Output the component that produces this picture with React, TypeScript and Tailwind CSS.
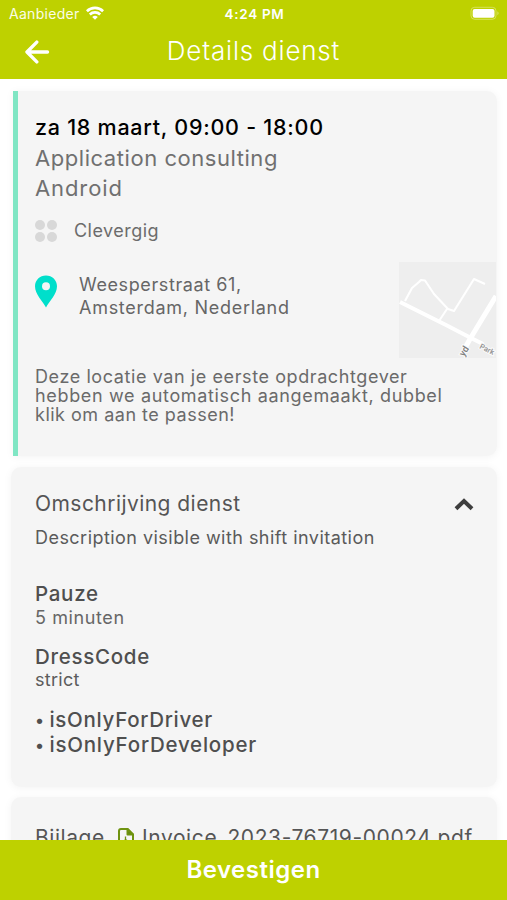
const card = "bg-[#f5f5f5] shadow-[0_1px_8px_rgba(0,0,0,0.05)]";

function StatusBar() {
  return (
    <div className="flex h-[28px] items-center text-white">
      <div className="flex flex-1 items-center gap-[6px] pl-[9px]">
        <span className="text-[14px] leading-[28px] tracking-[0.3px] text-[#fbfde6]">Aanbieder</span>
        <svg className="-mt-[2px]" width="18" height="14" viewBox="0 0 18 14" fill="none" stroke="#fff" strokeWidth="2.7">
          <path d="M0.9 5.2a11.6 11.6 0 0 1 16.2 0" />
          <path d="M3.8 8.5a7.5 7.5 0 0 1 10.4 0" />
          <path d="M9 13.8 6.2 11a4 4 0 0 1 5.6 0Z" fill="#fff" stroke="none" />
        </svg>
      </div>
      <span className="text-[13.5px] font-semibold leading-[28px] tracking-[0.7px]">4:24 PM</span>
      <div className="flex flex-1 items-center justify-end pr-[7px]">
        <svg className="-mt-[2px]" width="30" height="15" viewBox="0 0 30 15">
          <rect x="1" y="1.3" width="25" height="12" rx="3.6" fill="none" stroke="#fff" strokeOpacity=".35" />
          <rect x="2.7" y="3" width="21.8" height="8.8" rx="2" fill="#fff" />
          <path d="M27.5 5.3q2 2 0 4Z" fill="#fff" fillOpacity=".5" />
        </svg>
      </div>
    </div>
  );
}

function Header() {
  return (
    <header className="h-[79px] shrink-0 bg-[#bed100]">
      <StatusBar />
      <div className="flex h-[46px] items-center">
        <div className="w-[60px] pl-[24px]">
          <svg width="26" height="26" viewBox="0 0 26 26" fill="none" stroke="#fff" strokeWidth="3.4" strokeLinecap="round" strokeLinejoin="round">
            <path d="M23.500 14H3.400M12.800 4.100 3 14l9.800 9.900" />
          </svg>
        </div>
        <h1 className="flex-1 text-center text-[26px] font-light leading-[46px] tracking-[0.8px] text-white">Details dienst</h1>
        <div className="w-[60px]" />
      </div>
    </header>
  );
}

function MapPreview() {
  return (
    <svg className="h-[96px] w-[97px] shrink-0" viewBox="0 0 97 96">
      <rect width="97" height="96" fill="#eeeeee" />
      <g fill="none" stroke="#fff" strokeLinejoin="round">
        <path d="M6 39 13 26l7-6 2-2 4 .5L35 32l14 15 6 2 20-32 11 5M48 47l-8 12" strokeWidth="2.1" />
        <path d="M1 40 47 63l25 13 12 6" strokeWidth="4" />
        <path d="M97 34 71 77l-5 9" strokeWidth="5" />
      </g>
      <g fontWeight="600" stroke="#fafafa" strokeWidth="2" paintOrder="stroke" className="font-['Roboto',sans-serif]">
        <text transform="translate(80 86) rotate(27)" fontSize="7.5" fill="#969696">Park</text>
        <text transform="translate(65 95) rotate(-58)" fontSize="9.5" fill="#808080">yd</text>
      </g>
    </svg>
  );
}

function ShiftCard() {
  return (
    <section className={`${card} ml-[13px] mr-[10px] h-[365px] shrink-0 rounded-r-[10px] border-l-[5px] border-[#80e6c4] pl-[17px] pt-[21px]`}>
      <h2 className="text-[21.5px] font-medium leading-[30.5px] tracking-[0.74px] text-black">za 18 maart, 09:00 - 18:00</h2>
      <p className="text-[22px] leading-[30.5px] tracking-[0.55px] text-[#707070]">Application consulting</p>
      <p className="text-[22px] leading-[30.5px] tracking-[0.9px] text-[#707070]">Android</p>
      <div className="mt-[15px] flex h-[24px] items-center gap-[17px]">
        <div className="grid grid-cols-2 gap-[2px]">
          <i className="size-[10px] rounded-full bg-[#d8d8d8]" />
          <i className="size-[10px] rounded-full bg-[#d8d8d8]" />
          <i className="size-[10px] rounded-full bg-[#d8d8d8]" />
          <i className="size-[10px] rounded-full bg-[#d8d8d8]" />
        </div>
        <span className="text-[18px] leading-[24px] tracking-[0.46px] text-[#6c6c6c]">Clevergig</span>
      </div>
      <div className="mt-[19px] flex h-[96px] items-start pr-px">
        <svg className="mt-[13.5px] shrink-0" width="22" height="33" viewBox="0 0 22 33">
          <path d="M11 .5C4.9.5 0 5.2 0 11.2 0 19 7.500 26 11 32.500 14.500 26 22 19 22 11.200 22 5.200 17.100.5 11 .5Z" fill="#00dfcb" />
          <circle cx="11" cy="11.300" r="4" fill="#f5f5f5" />
        </svg>
        <div className="ml-[22px] mt-[12.5px] flex-1 whitespace-nowrap text-[18px] leading-[22.7px] text-[#666]">
          <p className="tracking-[0.6px]">Weesperstraat 61,</p>
          <p className="tracking-[0.72px]">Amsterdam, Nederland</p>
        </div>
        <MapPreview />
      </div>
      <div className="mt-[9.5px] whitespace-nowrap text-[18px] leading-[19px] text-[#6a6a6a]">
        <p className="tracking-[0.59px]">Deze locatie van je eerste opdrachtgever</p>
        <p className="tracking-[0.66px]">hebben we automatisch aangemaakt, dubbel</p>
        <p className="tracking-[0.5px]">klik om aan te passen!</p>
      </div>
    </section>
  );
}

function DescriptionCard() {
  return (
    <section className={`${card} ml-[11px] mr-[10px] mt-[11px] h-[320px] shrink-0 rounded-[10px] pl-[24px] pt-[21.5px] text-[#4f4f4f]`}>
      <div className="flex items-center justify-between pr-[23px]">
        <h2 className="text-[21px] leading-[30px] tracking-[0.45px] text-[#555]">Omschrijving dienst</h2>
        <svg width="20" height="14" viewBox="0 0 20 14" fill="none" stroke="#3e3e3e" strokeWidth="4">
          <path d="M2 11.8 10 4l8 7.8" />
        </svg>
      </div>
      <p className="mt-[7px] text-[18px] leading-[24px] tracking-[0.46px] text-[#5a5a5a]">Description visible with shift invitation</p>
      <h3 className="mt-[32.5px] text-[20.5px] font-medium leading-[24px] tracking-[0.7px]">Pauze</h3>
      <p className="pt-px text-[18px] leading-[22px] tracking-[0.6px] text-[#666]">5 minuten</p>
      <h3 className="mt-[15.5px] text-[20.5px] font-medium leading-[24px] tracking-[0.7px]">DressCode</h3>
      <p className="text-[18px] leading-[22px] tracking-[0.3px] text-[#5c5c5c]">strict</p>
      <ul className="mt-[17.5px] text-[20.5px] font-medium leading-[24.5px]">
        <li className="flex">
          <span className="w-[14.5px] text-[17px]">•</span>
          <span className="tracking-[0.7px]">isOnlyForDriver</span>
        </li>
        <li className="flex">
          <span className="w-[14.5px] text-[17px]">•</span>
          <span className="tracking-[0.78px]">isOnlyForDeveloper</span>
        </li>
      </ul>
    </section>
  );
}

function AttachmentCard() {
  return (
    <section className={`${card} ml-[11px] mr-[10px] mt-[10px] flex h-[90px] shrink-0 items-start rounded-[10px] pl-[24px] pt-[25.5px] text-[21px] leading-[30px] text-[#555]`}>
      <span className="w-[83px] tracking-[0.55px]">Bijlage</span>
      <svg className="mt-[5px] shrink-0" width="16" height="20" viewBox="0 0 16 20" fill="none" stroke="#6f9310" strokeWidth="2" strokeLinejoin="round">
        <path d="M3 1h6.500L15 6.500V17a2 2 0 0 1-2 2H3a2 2 0 0 1-2-2V3a2 2 0 0 1 2-2Z" />
        <path d="M9.500 1v5.500H15Z" fill="#5c8414" />
        <path d="M7.500 8.500v3l-3 4M7.500 11.500l3.500 2.500" strokeWidth="1.300" />
      </svg>
      <span className="ml-[8px] whitespace-nowrap tracking-[0.6px]">Invoice_2023-76719-00024.pdf</span>
    </section>
  );
}

export default function App() {
  return (
    <div className="flex h-[900px] w-[507px] flex-col overflow-hidden bg-white font-['Inter','Liberation_Sans',sans-serif]">
      <Header />
      <main className="flex min-h-0 flex-1 flex-col overflow-hidden pt-[12px]">
        <ShiftCard />
        <DescriptionCard />
        <AttachmentCard />
      </main>
      <button className="flex h-[60px] shrink-0 items-start justify-center bg-[#bed100] text-[24px] font-semibold leading-[59px] tracking-[0.5px] text-white">Bevestigen</button>
    </div>
  );
}
